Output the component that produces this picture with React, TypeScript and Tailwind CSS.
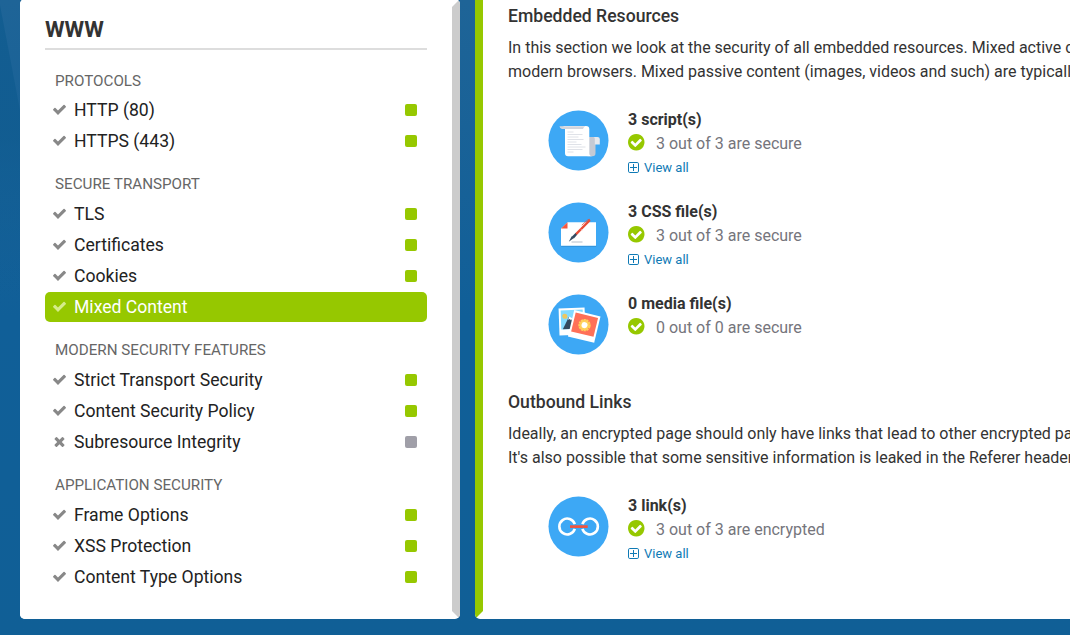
import React from "react";

type Status = "pass" | "fail";
type Item = { label: string; status: Status; active?: boolean };
type Group = { title: string; items: Item[] };

const groups: Group[] = [
  { title: "PROTOCOLS", items: [{ label: "HTTP (80)", status: "pass" }, { label: "HTTPS (443)", status: "pass" }] },
  {
    title: "SECURE TRANSPORT",
    items: [
      { label: "TLS", status: "pass" },
      { label: "Certificates", status: "pass" },
      { label: "Cookies", status: "pass" },
      { label: "Mixed Content", status: "pass", active: true },
    ],
  },
  {
    title: "MODERN SECURITY FEATURES",
    items: [
      { label: "Strict Transport Security", status: "pass" },
      { label: "Content Security Policy", status: "pass" },
      { label: "Subresource Integrity", status: "fail" },
    ],
  },
  {
    title: "APPLICATION SECURITY",
    items: [
      { label: "Frame Options", status: "pass" },
      { label: "XSS Protection", status: "pass" },
      { label: "Content Type Options", status: "pass" },
    ],
  },
];

function StatusMark({ status }: { status: Status }) {
  return (
    <svg viewBox="0 0 1792 1792" className="-mt-px h-[15px] w-[15px] shrink-0" fill="currentColor">
      {status === "pass" ? (
        <path d="M1671 566q0 40-28 68l-724 724-136 136q-28 28-68 28t-68-28l-136-136-362-362q-28-28-28-68t28-68l136-136q28-28 68-28t68 28l294 295 656-657q28-28 68-28t68 28l136 136q28 28 28 68z" />
      ) : (
        <path d="M1490 1322q0 40-28 68l-136 136q-28 28-68 28t-68-28l-294-294-294 294q-28 28-68 28t-68-28l-136-136q-28-28-28-68t28-68l294-294-294-294q-28-28-28-68t28-68l136-136q28-28 68-28t68 28l294 294 294-294q28-28 68-28t68 28l136 136q28 28 28 68t-28 68l-294 294 294 294q28 28 28 68z" />
      )}
    </svg>
  );
}

function SecureBadge() {
  return (
    <svg viewBox="128 128 1582 1582" className="-mt-1 h-[17px] w-[17px] shrink-0" fill="#96c800">
      <path d="M1412 734q0-28-18-46l-91-90q-19-19-45-19t-45 19l-408 407-226-226q-19-19-45-19t-45 19l-91 90q-18 18-18 46 0 27 18 45l362 362q19 19 45 19 27 0 46-19l543-543q18-18 18-45zm252 162q0 209-103 385.5t-279.5 279.5-385.5 103-385.5-103-279.5-279.5-103-385.5 103-385.5 279.5-279.5 385.5-103 385.5 103 279.5 279.5 103 385.5z" />
    </svg>
  );
}

function PlusBox() {
  return (
    <svg viewBox="0 0 11 11" className="-mt-px h-[11px] w-[11px] shrink-0" fill="none" stroke="#0f7ab5">
      <rect x="0.5" y="0.5" width="10" height="10" rx="1.3" />
      <path d="M5.5 2v7M2 5.5h7" />
    </svg>
  );
}

function ScriptArt() {
  return (
    <>
      <path d="M40 26.500h7V42.500q0 3.300-3 3.300h-5z" fill="#c5cad4" />
      <path d="M45 26.500h4q2.300 0 2.300 2v5.500h-5v-5.500q0-2-1.300-2z" fill="#e6e9ee" />
      <path d="M13 15.500h24.500q3.300 0 3.300 3V42.700q0 3 3 3H19.500q-3 0-3-3V19q0-3.500-3.500-3.500z" fill="#fff" />
      <path d="M11 15.700h26q-2 .6-2.500 2.800H13.500q-2 0-2.500-2.800z" fill="#d3d6de" />
      <path d="M19 21.500h6M19 24h15M19 26.500h11M19 29h16M19 31.500h9M19 34h14M19 36.500h18M19 39h15M19 41.500h6" stroke="#dfe2e8" strokeWidth="1" />
    </>
  );
}

function CssArt() {
  return (
    <>
      <path d="M12.700 43.300h35v1h-35z" fill="#318fd5" />
      <path d="M19 19.700h28.500v23.600h-35V26z" fill="#fff" />
      <path d="M19 19.700V26h-6.500z" fill="#f4583f" />
      <path d="M23 39.500h11" stroke="#b5bfca" strokeWidth="1" />
      <path d="M20.300 39.300l2.900-5.600 2.200 1.900z" fill="#334a60" />
      <path d="M23.300 34.300l3.900-4 1.700 1.600-3.500 4.100z" fill="#334a60" />
      <path d="M28.300 30.900L40.800 18.300" stroke="#e94b35" strokeWidth="2.300" strokeLinecap="round" />
      <path d="M33.300 22.700l6.200-5.500 1.800-.4" stroke="#e94b35" strokeWidth=".8" fill="none" />
      <path d="M32 26.200l1.500 1.500" stroke="#f6a397" strokeWidth=".8" />
    </>
  );
}

function MediaArt() {
  return (
    <>
      <g transform="translate(-.5 -1) rotate(-2 24 27)">
        <path d="M11 14.500h26v27H11z" fill="#fff" />
        <path d="M13 16.500h22v19H13z" fill="#84dbff" />
        <circle cx="17" cy="22.500" r="2.600" fill="#efc75e" />
        <path d="M14.500 35.500l6.500-12 3 2 4 10z" fill="#324a5e" />
        <path d="M21.500 23l-1.500 3 2-.5 1 1.500 1.500-2z" fill="#fff" />
      </g>
      <g transform="translate(35.700 31.900) rotate(13.500)">
        <path d="M-13.500-13.500h27v27h-27z" fill="#fff" />
        <path d="M-11.500-11.500h23V8h-23z" fill="#ff7058" />
        <circle cx="0" cy="-1.300" r="5" fill="#ffd05b" />
        <circle cx="0" cy="-1.300" r="5.300" fill="none" stroke="#ffd05b" strokeWidth="1.800" strokeDasharray="2.200 0.570" />
        <circle cx="0" cy="-1.300" r="3" fill="#fff" />
      </g>
    </>
  );
}

function LinkArt() {
  return (
    <>
      <g fill="none" stroke="#fff" strokeWidth="2.600">
        <path d="M26.300 32.300A7.900 7.900 0 1 1 26.300 27.700" />
        <path d="M33.900 32.300A7.900 7.900 0 1 0 33.900 27.700" />
      </g>
      <path d="M21.500 30.100H39.200" stroke="#f1543f" strokeWidth="2.700" />
    </>
  );
}

function Resource({ title, status, link, children }: { title: string; status: string; link?: boolean; children: React.ReactNode }) {
  return (
    <div className="flex">
      <svg viewBox="-0.5 -0.5 61 61" className="mt-[2px] mr-[19px] ml-[40px] h-[61px] w-[61px] shrink-0">
        <circle cx="30" cy="30" r="30" fill="#3da8f5" />
        {children}
      </svg>
      <div className="leading-6">
        <div className="font-bold text-[#333]">{title}</div>
        <div className="flex items-center gap-[11px] text-[#75757c]">
          <SecureBadge />
          <span>{status}</span>
        </div>
        {link && (
          <a className="flex items-center gap-[5px] text-[13px] text-[#0f7ab5]">
            <PlusBox />
            View all
          </a>
        )}
      </div>
    </div>
  );
}

export default function App() {
  return (
    <div className="relative isolate flex h-[635px] w-[1070px] items-start gap-[15px] overflow-hidden bg-linear-to-b from-[#1e6497] via-[#105f98] via-50% to-[#105f96] pl-5 font-[Roboto,sans-serif]">
      <svg viewBox="0 0 20 320" className="absolute top-0 left-0 -z-10 h-[320px] w-5">
        <defs>
          <linearGradient id="shade" x1="0" y1="0" x2="0" y2="1">
            <stop offset="0" stopColor="#0f5b8f" stopOpacity="0.75" />
            <stop offset="0.400" stopColor="#0f5b8f" stopOpacity="0.750" />
            <stop offset="1" stopColor="#105f98" stopOpacity="0" />
          </linearGradient>
        </defs>
        <path d="M0 5L20 110V320H0z" fill="url(#shade)" />
      </svg>
      <aside className="-mt-px h-[620px] w-[440px] shrink-0 rounded-[5px] border-8 border-white border-r-[#ccc] bg-white pr-[25px] pl-[17px]">
        <h1 className="h-[43px] border-b-2 border-[#ddd] pt-[6px] text-[22.4px] leading-8 font-bold text-[#333]">WWW</h1>
        <nav className="pt-[3px]">
          {groups.map((g) => (
            <section key={g.title}>
              <h2 className="h-[42px] pt-[17px] pl-[10px] text-[15.2px] leading-5 text-[#666] [section:first-child>&]:pt-[18px]">{g.title}</h2>
              {g.items.map((it) => (
                <div
                  key={it.label}
                  className={
                    it.active
                      ? "mb-px flex h-[30px] items-center rounded-[5px] bg-[#96c800] pr-[10px] pl-[7px] text-white"
                      : "mb-px flex h-[30px] items-center pr-[10px] pl-[7px] text-[#222]"
                  }
                >
                  <span className={it.active ? "mr-[7px] text-[#d5ec8a]" : "mr-[7px] text-[#888]"}>
                    <StatusMark status={it.status} />
                  </span>
                  <span className="flex-1 text-[17.6px] leading-[30px]">{it.label}</span>
                  {!it.active && (
                    <span className={it.status === "pass" ? "h-3 w-3 rounded-[2px] bg-[#96c800]" : "h-3 w-3 rounded-[2px] bg-[#a09fa8]"} />
                  )}
                </div>
              ))}
            </section>
          ))}
        </nav>
      </aside>

      <main className="-mt-5 h-[639px] w-[700px] shrink-0 rounded-[5px] border-8 border-white border-l-[#96c800] bg-white pl-[25px] text-base whitespace-nowrap text-[#333]">
        <h2 className="pt-4 text-[17.6px] leading-6 font-medium">Embedded Resources</h2>
        <p className="pt-2 leading-6">
          In this section we look at the security of all embedded resources. Mixed active content
          <br />
          modern browsers. Mixed passive content (images, videos and such) are typically
        </p>
        <div className="flex flex-col gap-5 pt-6">
          <Resource title="3 script(s)" status="3 out of 3 are secure" link><ScriptArt /></Resource>
          <Resource title="3 CSS file(s)" status="3 out of 3 are secure" link><CssArt /></Resource>
          <Resource title="0 media file(s)" status="0 out of 0 are secure"><MediaArt /></Resource>
        </div>
        <h2 className="pt-[35px] text-[17.6px] leading-6 font-medium">Outbound Links</h2>
        <p className="pt-2 pb-6 leading-6">
          Ideally, an encrypted page should only have links that lead to other encrypted pages
          <br />
          It's also possible that some sensitive information is leaked in the Referer header
        </p>
        <Resource title="3 link(s)" status="3 out of 3 are encrypted" link><LinkArt /></Resource>
      </main>
    </div>
  );
}
